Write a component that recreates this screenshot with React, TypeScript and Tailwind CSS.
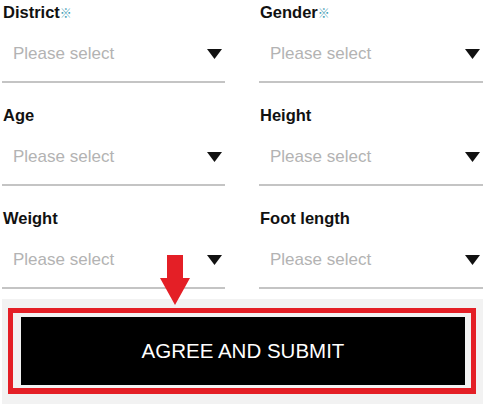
import React from 'react';

const fields = [
  { label: 'District', required: true },
  { label: 'Gender', required: true },
  { label: 'Age', required: false },
  { label: 'Height', required: false },
  { label: 'Weight', required: false },
  { label: 'Foot length', required: false },
];

function Field({ label, required }: { label: string; required: boolean }) {
  return (
    <div className="flex flex-col">
      <div className="h-[24px] pl-[1px] text-[16.5px] leading-[24px] font-bold text-[#111]">
        {label}
        {required && (
          <span className="text-[12px] font-normal text-[#3f9db5] [font-family:'Noto_Sans_CJK_SC',sans-serif]">
            ※
          </span>
        )}
      </div>
      <div className="flex h-[57px] items-center justify-between pl-[11px] pr-[3px] pt-[2px]">
        <span className="text-[17px] text-[#b3b3b3]">Please select</span>
        <svg width="15" height="10" viewBox="0 0 15 10">
          <polygon points="0,0 15,0 7.5,10" fill="#111" />
        </svg>
      </div>
      <div className="h-[2px] bg-[#c4c4c4]" />
    </div>
  );
}

export default function App() {
  return (
    <div className="relative h-[405px] w-[487px] overflow-hidden bg-white pl-[2px] [font-family:'Liberation_Sans',Arial,sans-serif]">
      <div className="grid w-[481px] grid-cols-[223px_224px] gap-x-[34px] gap-y-[20px]">
        {fields.map((f) => (
          <Field key={f.label} label={f.label} required={f.required} />
        ))}
      </div>

      <div className="mt-[10px] w-[481px] bg-[#f2f2f2] pb-[10px] pl-[6px] pr-[7px] pt-[9px]">
        <div className="border-[5px] border-b-[6px] border-[#e41f26] pb-[3px] pl-[8px] pr-[6px] pt-[4px]">
          <button className="flex h-[68px] w-full items-center justify-center bg-black text-[20.5px] text-white">
            AGREE AND SUBMIT
          </button>
        </div>
      </div>

      {/* annotation arrow */}
      <svg className="absolute left-[160px] top-[255px]" width="30" height="50" viewBox="0 0 30 50">
        <path d="M7 0 H23 V23 H30 L15 50 L0 23 H7 Z" fill="#e41f26" />
      </svg>
    </div>
  );
}
